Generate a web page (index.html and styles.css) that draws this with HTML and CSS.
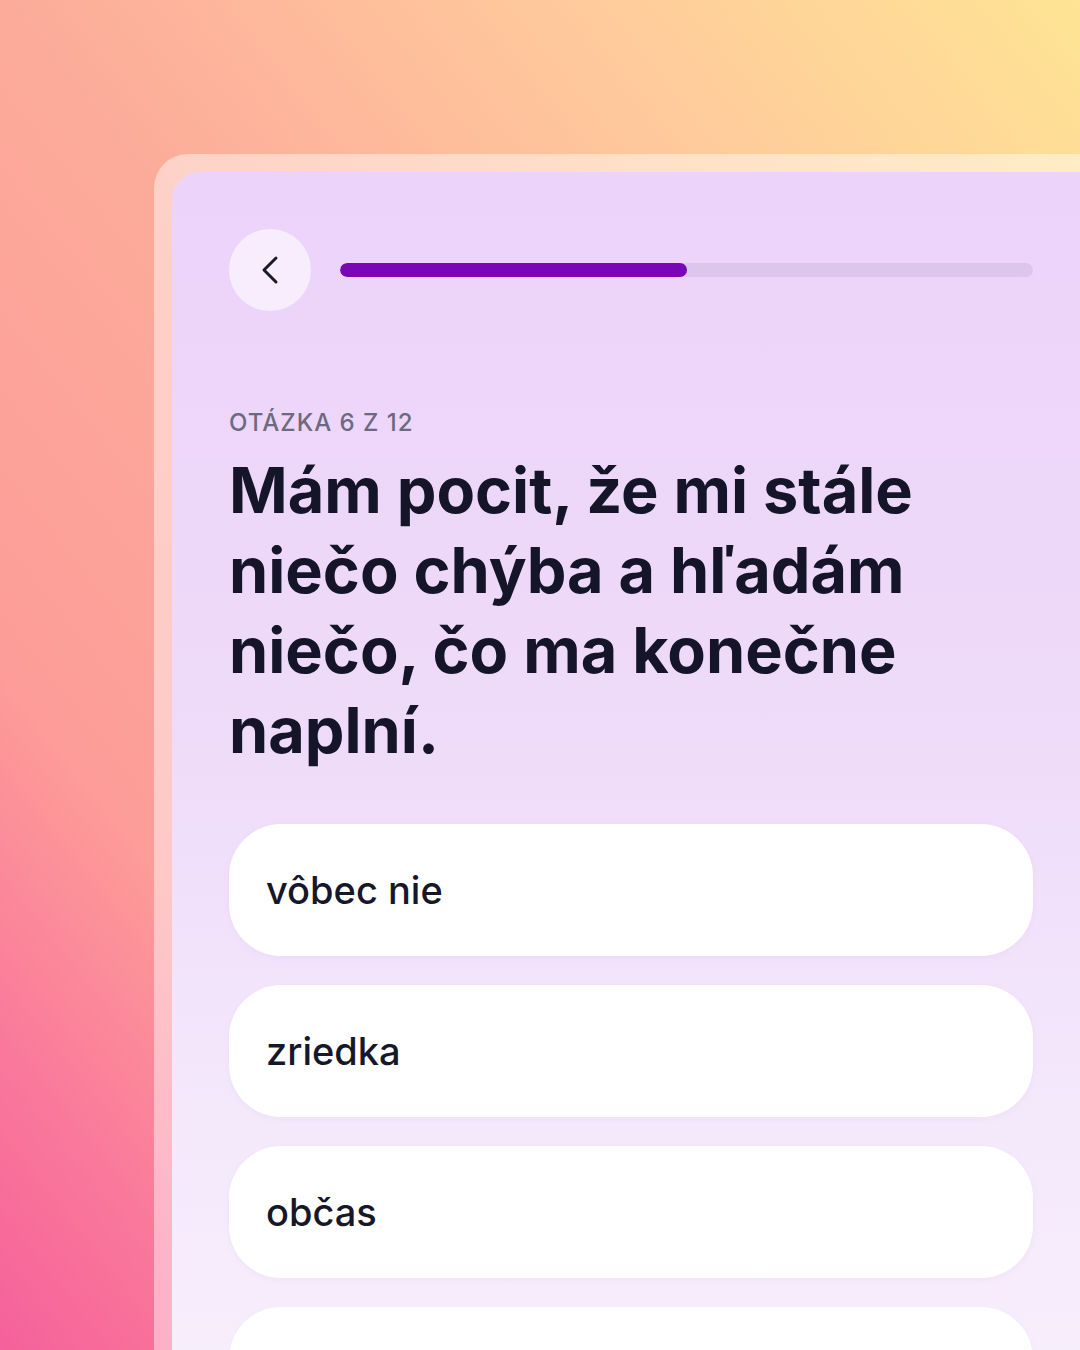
FILE: index.html
```html
<!DOCTYPE html>
<html lang="sk">
<head>
<meta charset="utf-8">
<title>Otázka 6 z 12</title>
<link rel="stylesheet" href="styles.css">
</head>
<body>
<div class="frame">
  <main class="card">
    <header class="top">
      <button class="back" aria-label="Späť">
        <svg width="24" height="30" viewBox="0 0 24 30"><path d="M18 3 L6 15 L18 27" fill="none" stroke="#1b1a2c" stroke-width="3" stroke-linecap="round" stroke-linejoin="round"/></svg>
      </button>
      <div class="track"><div class="fill" style="width:50%"></div></div>
    </header>
    <p class="label">OTÁZKA 6 Z 12</p>
    <h1 class="question">Mám pocit, že mi stále niečo chýba a hľadám niečo, čo ma konečne naplní.</h1>
    <div class="options">
      <button class="option">vôbec nie</button>
      <button class="option">zriedka</button>
      <button class="option">občas</button>
      <button class="option">často</button>
    </div>
  </main>
</div>
</body>
</html>
```
FILE: styles.css
```css
html, body {
  margin: 0;
}
body {
  width: 1080px;
  height: 1350px;
  overflow: hidden;
  background: linear-gradient(to top right, #f5619a 0%, #fa7a9b 12%, #fd9c98 25%, #fcab9a 50%, #ffc89c 75%, #fee494 100%);
  font-family: Inter, "Open Sans", "Liberation Sans", sans-serif;
  padding: 154px 0 0 154px;
  box-sizing: border-box;
}
.frame {
  width: 926px;
  height: 1196px;
  background: rgba(255, 255, 255, 0.45);
  border-radius: 34px 0 0 0;
  padding: 18px 0 0 18px;
  box-sizing: border-box;
  overflow: hidden;
}
.card {
  height: 100%;
  background: linear-gradient(180deg, #ecd3fa 0%, #eedaf9 45%, #f4e8fb 80%, #f7eefc 100%);
  border-radius: 28px 0 0 0;
  padding: 57px 47px 0 57px;
  box-sizing: border-box;
  overflow: hidden;
}
.top {
  display: flex;
  align-items: center;
  gap: 29px;
}
.back {
  width: 82px;
  height: 82px;
  border-radius: 50%;
  border: none;
  background: #f7edfd;
  display: flex;
  align-items: center;
  justify-content: center;
  padding: 0;
  flex: none;
}
.track {
  flex: 1;
  height: 14px;
  border-radius: 7px;
  background: #dcc6eb;
  overflow: hidden;
}
.fill {
  height: 100%;
  background: #7a07b7;
  border-radius: 7px;
}
.label {
  margin: 97px 0 0;
  font-size: 24px;
  font-weight: 500;
  letter-spacing: 1px;
  color: #6c6a80;
  line-height: 30px;
}
.question {
  margin: 12px 0 0;
  font-size: 63px;
  line-height: 80px;
  font-weight: 700;
  letter-spacing: 0;
  color: #15152a;
  max-width: 740px;
}
.options {
  margin-top: 54px;
  display: flex;
  flex-direction: column;
  gap: 29px;
}
.option {
  height: 132px;
  border: none;
  border-radius: 52px;
  background: #ffffff;
  text-align: left;
  padding: 0 37px;
  font-family: inherit;
  font-size: 38px;
  font-weight: 500;
  color: #17172a;
  flex: none;
  box-shadow: 0 2px 6px rgba(180, 140, 200, 0.08);
}
```
